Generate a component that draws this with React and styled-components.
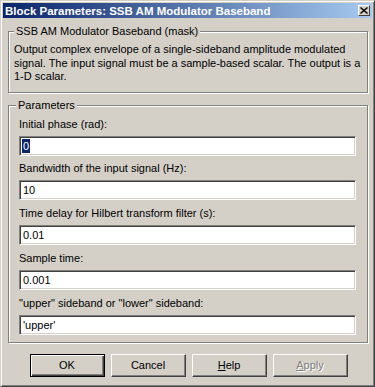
import React from 'react';
import styled, { createGlobalStyle } from 'styled-components';

/* ================= STYLES ================= */
const Global = createGlobalStyle`
  html, body { margin:0; padding:0; background:#d4d0c8; }
  body { font-family:"Liberation Sans", Arial, sans-serif; font-size:11px; color:#000; }
`;

const Window = styled.div`
  box-sizing:border-box;width:375px;height:387px;display:flex;flex-direction:column;
  background:#d4d0c8;
  border:1px solid;border-color:#d4d0c8 #404040 #404040 #d4d0c8;
  box-shadow:inset 1px 1px 0 #fff, inset -1px -1px 0 #808080;
  padding:2px;
`;
const TitleBar = styled.div`
  height:15px;display:flex;align-items:center;justify-content:space-between;
  padding:0 2px 0 2px;
  background:linear-gradient(to right, #0a246a, #a6caf0);
`;
const Title = styled.span`
  color:#fff;font-weight:bold;font-size:11.5px;
  font-family:"Liberation Sans", Arial, sans-serif;
`;
const CloseBtn = styled.div`
  box-sizing:border-box;width:12px;height:11px;background:#d4d0c8;
  border:1px solid;border-color:#fff #404040 #404040 #fff;
  display:flex;align-items:center;justify-content:center;
`;
const Body = styled.div`
  flex:1;display:flex;flex-direction:column;padding:7px 4px 0 5px;
`;
const Group = styled.fieldset`
  margin:${p => p.$mt || 0}px 0 0 0;
  padding:${p => p.$pad};
  border:1px solid #808080;
  box-shadow:inset 1px 1px 0 #fff, 1px 1px 0 #fff;
  min-width:0;
`;
const Legend = styled.legend`
  padding:0 2px;margin-left:${p => p.$ml || 0}px;
  background:#d4d0c8;line-height:13px;position:relative;
`;
const Desc = styled.div`line-height:13.5px;`;
const Rows = styled.div`display:flex;flex-direction:column;gap:5.75px;`;
const Row = styled.div`display:flex;flex-direction:column;gap:5px;`;
const Label = styled.div`line-height:14px;height:14px;`;
const Field = styled.div`
  box-sizing:border-box;height:20px;background:#fff;
  border:1px solid;border-color:#808080 #fff #fff #808080;
  box-shadow:inset 1px 1px 0 #404040, inset -1px -1px 0 #d4d0c8;
  padding:0 3px;display:flex;align-items:center;
`;
const Selected = styled.span`
  background:#0a246a;color:#fff;line-height:14px;padding:0 1px;margin-left:-1px;
`;
const ButtonRow = styled.div`
  display:flex;justify-content:center;gap:6px;margin-top:11px;padding-left:1px;
`;
const Button = styled.div`
  box-sizing:border-box;width:75px;height:23px;display:flex;align-items:center;justify-content:center;
  background:#d4d0c8;
  border:1px solid;
  border-color:${p => (p.$default ? '#000' : '#fff #404040 #404040 #fff')};
  box-shadow:${p => (p.$default
    ? 'inset 1px 1px 0 #fff, inset -1px -1px 0 #404040, inset -2px -2px 0 #808080'
    : 'inset -1px -1px 0 #808080')};
  color:${p => (p.$disabled ? '#808080' : '#000')};
  text-shadow:${p => (p.$disabled ? '1px 1px 0 #fff' : 'none')};
  u { text-decoration:underline; }
`;

const params = [
  { label: 'Initial phase (rad):', value: '0', selected: true },
  { label: 'Bandwidth of the input signal (Hz):', value: '10' },
  { label: 'Time delay for Hilbert transform filter (s):', value: '0.01' },
  { label: 'Sample time:', value: '0.001' },
  { label: '"upper" sideband or "lower" sideband:', value: "'upper'" },
];

/* ================= COMPONENT ================= */
const App = () => (
  <>
    <Global />
    <Window>
      <TitleBar>
        <Title>Block Parameters: SSB AM Modulator Baseband</Title>
        <CloseBtn>
          <svg width="8" height="7" viewBox="0 0 8 7">
            <path d="M0.5 0.5 L7.5 6.5 M7.5 0.5 L0.5 6.5" stroke="#000" strokeWidth="1.4" />
          </svg>
        </CloseBtn>
      </TitleBar>
      <Body>
        <Group $pad="5px 5px 8px 5px">
          <Legend $ml={0}>SSB AM Modulator Baseband (mask)</Legend>
          <Desc>
            Output complex envelope of a single-sideband amplitude modulated signal. The input
            signal must be a sample-based scalar. The output is a 1-D scalar.
          </Desc>
        </Group>
        <Group $mt={6} $pad="5px 11px 7px 10px">
          <Legend $ml={-3}>Parameters</Legend>
          <Rows>
            {params.map(p => (
              <Row key={p.label}>
                <Label>{p.label}</Label>
                <Field>{p.selected ? <Selected>{p.value}</Selected> : p.value}</Field>
              </Row>
            ))}
          </Rows>
        </Group>
        <ButtonRow>
          <Button $default>OK</Button>
          <Button>Cancel</Button>
          <Button><span><u>H</u>elp</span></Button>
          <Button $disabled><span><u>A</u>pply</span></Button>
        </ButtonRow>
      </Body>
    </Window>
  </>
);

export default App;
